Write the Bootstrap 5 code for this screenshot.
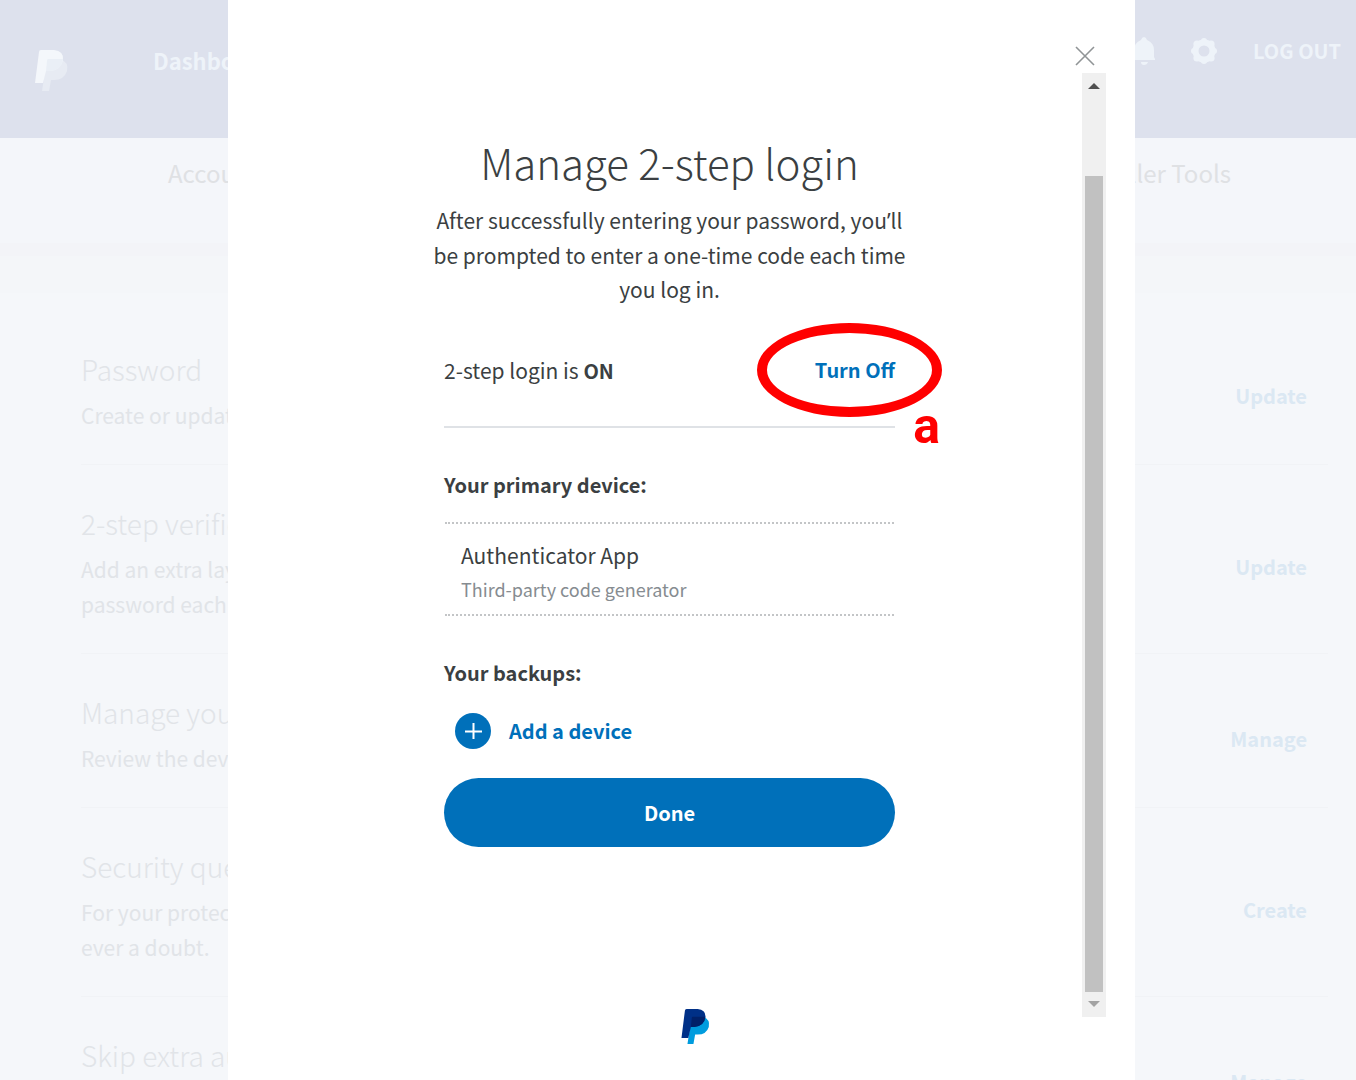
<!DOCTYPE html>
<html lang="en">
<head>
<meta charset="utf-8">
<meta name="viewport" content="width=device-width, initial-scale=1">
<title>Manage 2-step login</title>
<link rel="stylesheet" href="https://cdn.jsdelivr.net/npm/bootstrap@5.3.0/dist/css/bootstrap.min.css">
<style>
  body { font-family: "Noto Sans CJK SC", "Noto Sans", sans-serif; font-size: 21px; line-height: 34px; color: #3b3f42; background: #f5f7fa; }
  a { text-decoration: none; }
  .page-shell { height: 100vh; overflow: hidden; }
  /* dimmed page behind the dialog */
  .site-header { height: 138px; background: #dde1ed; padding: 0 15px 0 35px; }
  .site-header a { color: #eef3f9; font-weight: 700; font-size: 20px; }
  .brand-mark { margin-top: 50px; }
  .site-header .main-link { margin: 43px 0 0 84px; font-size: 22px; }
  .tools { margin-top: 34px; gap: 36px; }
  .sub-links { height: 105px; padding: 18px 125px 0 168px; background: #f4f6fa; }
  .sub-links a { color: #dfe1e4; font-size: 24px; }
  .shade-band { height: 50px; background: linear-gradient(#f3f4f8 0 13px, #f4f6f9 13px 100%); }
  .settings-list { margin: 0 28px 0 81px; padding-top: 18px; }
  .settings-row { padding: 37px 0 31px; border-bottom: 1px solid #f1f3f6; color: #e1e4e8; }
  .settings-row h2 { font-size: 28px; line-height: 42px; font-weight: 300; margin-bottom: 8px; }
  .settings-row p { line-height: 35px; margin: 0; white-space: nowrap; }
  .settings-row a { color: #dbe8f3; font-weight: 700; font-size: 20px; padding: 10px 21px 0 0; }
  /* dialog */
  .dialog-layer { padding: 0 221px 0 228px; }
  .dialog-panel { padding: 42px 29px 0; }
  .close-btn { width: 28px; height: 28px; margin-right: 7px; }
  .scroll-frame { height: 944px; margin-top: 3px; }
  .scroll-track { width: 24px; background: #f0f0f0; }
  .scroll-thumb { margin: 77px 3px 0 3px; height: 816px; background: #c1c1c1; }
  .dialog-body { width: 451px; padding-top: 58px; }
  .dialog-body h1 { font-size: 42px; line-height: 62px; font-weight: 300; margin-bottom: 10px; }
  .intro { margin: 0 -20px; }
  .apos { font-family: "Noto Sans", sans-serif; }
  .status-row { margin-top: 46px; padding-bottom: 37px; line-height: 36px; border-bottom: 2px solid #dfe2e6; }
  .blue-link, .on-word { font-weight: 700; font-size: 20px; }
  .blue-link { color: #0070ba; }
  .dialog-body h2 { font-size: 20px; line-height: 34px; font-weight: 700; margin: 40px 0 20px; }
  .device-item { margin: 0 1px; padding: 14px 16px 8px; border: 2px dotted #c3c5c7; border-width: 2px 0; }
  .device-note { font-size: 18px; color: #868c91; }
  .add-row { margin: 23px 0 29px 11px; gap: 18px; }
  .done-btn { height: 69px; background: #0070ba; color: #fff; font-weight: 700; font-size: 20px; }
  .done-btn:hover { background: #005ea6; color: #fff; }
  .dialog-foot { margin-top: -8px; padding-left: 28px; }
  /* annotation over the link */
  .mark-ring { width: 185px; height: 94px; right: -47px; top: -29px; border: 10px solid #f00; border-radius: 50%; pointer-events: none; }
  .mark-letter { right: -45px; top: 49px; font: 700 50px/50px Roboto, sans-serif; color: #f00; }
</style>
<script src="https://cdn.jsdelivr.net/npm/bootstrap@5.3.0/dist/js/bootstrap.bundle.min.js"></script>
</head>
<body>
<div class="page-shell position-relative">
  <div aria-hidden="true">
    <header class="site-header d-flex align-items-start">
      <svg class="brand-mark" width="34" height="41" viewBox="0 0 34 41">
        <path d="M12 9h13q9 3 7 12-3 9-13 9h-3l-2 11H7z" fill="#e7ebf3"/>
        <path d="M6 0h13q10 1 9 10-2 10-13 11h-4L8 33H0L4 2q0-2 2-2z" fill="#f4f7fb"/>
        <path d="M13 9h15q-1 11-13 12h-4l1-10q0-2 1-2z" fill="#eaeff6"/>
      </svg>
      <a class="main-link" href="#">Dashboard</a>
      <div class="tools d-flex align-items-center ms-auto">
        <svg width="22" height="29" viewBox="0 0 22 29" fill="#eef3f9"><path d="M11 0q2 0 3 3 7 3 7 10v7l1 2v1H0v-1l1-2v-7Q1 6 8 3q1-3 3-3zM8 25h7q-1 3-4 3t-3-3z"/></svg>
        <svg width="26" height="26" viewBox="-13 -13 26 26"><g fill="#eef3f9"><circle r="8.500" fill="none" stroke="#eef3f9" stroke-width="6"/><circle cx="0" cy="-10" r="3"/><circle cx="7" cy="-7" r="3.600"/><circle cx="10" cy="0" r="3"/><circle cx="7" cy="7" r="3.600"/><circle cx="0" cy="10" r="3"/><circle cx="-7" cy="7" r="3.600"/><circle cx="-10" cy="0" r="3"/><circle cx="-7" cy="-7" r="3.600"/></g><circle r="5" fill="#dde1ed"/></svg>
        <a href="#">LOG OUT</a>
      </div>
    </header>
    <nav class="sub-links d-flex justify-content-between align-items-start">
      <a href="#">Account</a><a href="#">Seller Tools</a>
    </nav>
    <div class="shade-band"></div>
    <main class="settings-list">
      <section class="settings-row d-flex justify-content-between align-items-center">
        <div><h2>Password</h2><p>Create or update your password.</p></div><a href="#">Update</a>
      </section>
      <section class="settings-row d-flex justify-content-between align-items-center">
        <div><h2>2-step verification</h2><p>Add an extra layer of security by using your<br>password each time you log in.</p></div><a href="#">Update</a>
      </section>
      <section class="settings-row d-flex justify-content-between align-items-center">
        <div><h2>Manage your devices</h2><p>Review the devices you use.</p></div><a href="#">Manage</a>
      </section>
      <section class="settings-row d-flex justify-content-between align-items-center">
        <div><h2>Security questions</h2><p>For your protection, choose two in case there is<br>ever a doubt.</p></div><a href="#">Create</a>
      </section>
      <section class="settings-row d-flex justify-content-between align-items-center">
        <div><h2>Skip extra authentication</h2><p>Review where you stay logged in.</p></div><a href="#">Manage</a>
      </section>
    </main>
  </div>

  <div class="dialog-layer position-absolute top-0 start-0 w-100 h-100">
    <div class="dialog-panel bg-white h-100" role="dialog" aria-labelledby="dlgTitle">
      <div class="d-flex justify-content-end">
        <button type="button" class="close-btn btn p-0 border-0 d-flex align-items-center justify-content-center" aria-label="Close">
          <svg width="20" height="20" viewBox="0 0 20 20" stroke="#909496" stroke-width="1.6"><path d="M1 1l18 18M19 1L1 19"/></svg>
        </button>
      </div>
      <div class="scroll-frame d-flex">
        <div class="flex-grow-1 d-flex justify-content-center">
          <div class="dialog-body">
            <h1 id="dlgTitle" class="text-center">Manage 2-step login</h1>
            <p class="intro text-center">After successfully entering your password, you<span class="apos">’</span>ll<br>be prompted to enter a one-time code each time<br>you log in.</p>
            <div class="status-row d-flex justify-content-between position-relative">
              <span>2-step login is <strong class="on-word">ON</strong></span>
              <a class="blue-link" href="#">Turn Off</a>
              <span class="mark-ring position-absolute"></span>
              <span class="mark-letter position-absolute">a</span>
            </div>
            <h2>Your primary device:</h2>
            <div class="device-item">
              <div>Authenticator App</div>
              <div class="device-note">Third-party code generator</div>
            </div>
            <h2>Your backups:</h2>
            <a class="add-row blue-link d-flex align-items-center" href="#">
              <svg width="36" height="36" viewBox="0 0 36 36"><circle cx="18" cy="18" r="18" fill="#0070ba"/><path d="M10 18.500h17M18.500 10v16" stroke="#fff" stroke-width="2"/></svg>
              <span>Add a device</span>
            </a>
            <button type="button" class="done-btn btn w-100 rounded-pill border-0">Done</button>
          </div>
        </div>
        <div class="scroll-track d-flex flex-column" aria-hidden="true">
          <svg width="24" height="26" viewBox="0 0 24 26"><path d="M6 16l6-6 6 6z" fill="#505050"/></svg>
          <div class="scroll-thumb"></div>
          <svg width="24" height="24" viewBox="0 0 24 24"><path d="M6 9l6 6 6-6z" fill="#a3a3a3"/></svg>
        </div>
      </div>
      <div class="dialog-foot text-center">
        <svg class="d-block mx-auto" width="30" height="35" viewBox="0 0 34 41">
          <path d="M12 9h13q9 3 7 12-3 9-13 9h-3l-2 11H7z" fill="#009cde"/>
          <path d="M6 0h13q10 1 9 10-2 10-13 11h-4L8 34H0L4 2q0-2 2-2z" fill="#003087"/>
          <path d="M13 9h15q-1 11-13 12h-4l1-10q0-2 1-2z" fill="#012169"/>
        </svg>
      </div>
    </div>
  </div>
</div>
</body>
</html>
